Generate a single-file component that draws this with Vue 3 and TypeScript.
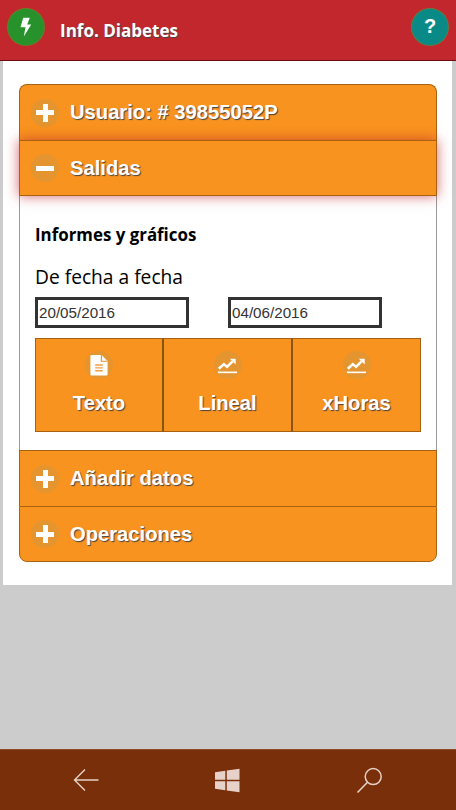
<script setup lang="ts">
const topRows = ['Añadir datos', 'Operaciones']
const actions = [
  { label: 'Texto', icon: 'doc' },
  { label: 'Lineal', icon: 'chart' },
  { label: 'xHoras', icon: 'chart' },
]
</script>

<template>
  <div class="page">
    <header class="topbar">
      <span class="round green">
        <svg width="36" height="36" viewBox="0 0 36 36">
          <path d="M15.2 8.8h6.6l-2.6 6.7h4L15.8 27.5l1.7-9.3h-5z" fill="#fff" />
        </svg>
      </span>
      <h1>Info. Diabetes</h1>
      <span class="round teal">?</span>
    </header>

    <main class="sheet">
      <section class="accordion">
        <div class="row first">
          <span class="bubble"><span class="plus"></span></span>
          <span>Usuario: # 39855052P</span>
        </div>
        <div class="row active">
          <span class="bubble"><span class="minus"></span></span>
          <span>Salidas</span>
        </div>

        <div class="panel">
          <h2>Informes y gráficos</h2>
          <p>De fecha a fecha</p>
          <div class="dates">
            <input type="text" value="20/05/2016" />
            <input type="text" value="04/06/2016" />
          </div>
          <div class="actions">
            <button v-for="a in actions" :key="a.label" type="button">
              <span class="bubble">
                <svg v-if="a.icon === 'doc'" width="18" height="21" viewBox="0 0 18 22">
                  <path d="M1 0h10.5L18 6.5V20.5a1 1 0 0 1-1 1H1a1 1 0 0 1-1-1V1a1 1 0 0 1 1-1z" fill="#fff" />
                  <path d="M11.5 0v6.5H18" fill="#fff" stroke="#e4952f" stroke-width="1.2" />
                  <path d="M5 10.5h8M5 13.5h8M5 16.5h8" stroke="#f0a044" stroke-width="1.4" />
                </svg>
                <svg v-else width="21" height="17" viewBox="0 0 23 18">
                  <path d="M2 12.5l5.5-5 3.5 3 6-6" fill="none" stroke="#fff" stroke-width="2.8" />
                  <path d="M14 1.5h6.5V8z" fill="#fff" />
                  <path d="M1 16.5h21" stroke="#fff" stroke-width="1.8" />
                </svg>
              </span>
              <span>{{ a.label }}</span>
            </button>
          </div>
        </div>

        <div v-for="(r, i) in topRows" :key="r" class="row" :class="{ last: i === 1 }">
          <span class="bubble"><span class="plus"></span></span>
          <span>{{ r }}</span>
        </div>
      </section>
    </main>

    <div class="spacer"></div>

    <footer class="navbar">
      <svg width="26" height="24" viewBox="0 0 26 24">
        <path d="M12 1.5L1.5 12 12 22.5M1.5 12H25.5" fill="none" stroke="#e6d2c8" stroke-width="1.4" />
      </svg>
      <svg width="25" height="25" viewBox="0 0 25 25">
        <path d="M0 4.2L10.3 2.8V11.8H0zM11.8 2.6L24.5 .7V11.8H11.8zM0 13.2H10.3V22.2L0 20.8zM11.8 13.2H24.5V24.3L11.8 22.4z" fill="#e6d2c8" />
      </svg>
      <svg width="27" height="27" viewBox="0 0 27 27">
        <circle cx="17.2" cy="9.6" r="8" fill="none" stroke="#e6d2c8" stroke-width="1.5" />
        <path d="M11.5 15.3L1.5 25.5" fill="none" stroke="#e6d2c8" stroke-width="1.6" />
      </svg>
    </footer>
  </div>
</template>

<style scoped>
.page {
  height: 810px;
  display: flex;
  flex-direction: column;
  background: #cccccc;
  font-family: "Liberation Sans", Arial, sans-serif;
}
.topbar {
  height: 60px;
  flex: none;
  display: flex;
  align-items: flex-start;
  padding: 0 8px;
  background: #c1272d;
  border-bottom: 1px solid #6d0d10;
  box-sizing: content-box;
}
.topbar h1 {
  flex: 1;
  margin: 19px 0 0 16px;
  font: 700 17px/24px "Open Sans", sans-serif;
  color: #fff;
  text-shadow: 1px 1px 1px #444;
}
.round {
  width: 36px;
  height: 36px;
  margin-top: 8.5px;
  border-radius: 50%;
  display: flex;
  align-items: center;
  justify-content: center;
  color: #fff;
  font-weight: 700;
  font-size: 20px;
}
.green {
  background: #27922b;
  box-shadow: 0 0 0 1px #6a7d2a;
}
.teal {
  background: #0a8a87;
  box-shadow: 0 0 0 1px #5f7d45;
}
.sheet {
  flex: none;
  height: 524px;
  margin: 0 4px 0 3px;
  padding: 23px 15px 0 16px;
  box-sizing: border-box;
  background: #fff;
}
.accordion {
  display: flex;
  flex-direction: column;
}
.row {
  height: 56px;
  box-sizing: border-box;
  display: flex;
  align-items: center;
  gap: 11px;
  padding-left: 11px;
  background: #f9931f;
  border: 1px solid #a8620f;
  border-bottom: 0;
  color: #fff;
  font-size: 20.2px;
  font-weight: 700;
  text-shadow: 1px 1px 1px #444;
}
.row.first {
  border-radius: 8px 8px 0 0;
}
.row.last {
  border-bottom: 1px solid #a8620f;
  border-radius: 0 0 8px 8px;
}
.row.active {
  border-bottom: 1px solid #a8620f;
  box-shadow: 0 0 12px rgba(193, 39, 45, 0.7);
  position: relative;
}
.bubble {
  width: 28px;
  height: 28px;
  flex: none;
  border-radius: 50%;
  background: #e4952f;
  display: flex;
  align-items: center;
  justify-content: center;
}
.plus,
.minus {
  display: block;
  background: #fff;
}
.minus {
  width: 18px;
  height: 5px;
}
.plus {
  width: 18px;
  height: 18px;
  background:
    linear-gradient(#fff, #fff) center / 18px 5px no-repeat,
    linear-gradient(#fff, #fff) center / 5px 18px no-repeat;
  border-radius: 1px;
}
.panel {
  height: 254px;
  box-sizing: border-box;
  padding: 28px 15px 0 15px;
  background: #fff;
  border-left: 1px solid #999;
  border-right: 1px solid #999;
  color: #000;
}
.panel h2 {
  margin: 0;
  height: 22px;
  font: 700 16.9px/22px "Open Sans", sans-serif;
}
.panel p {
  margin: 19px 0 0;
  height: 24px;
  font: 400 19.2px/24px "Open Sans", sans-serif;
}
.dates {
  display: flex;
  justify-content: space-between;
  margin-top: 8px;
  padding-right: 39px;
}
.dates input {
  width: 154px;
  height: 31px;
  box-sizing: border-box;
  padding: 0 1px;
  border: 3px solid #333;
  border-radius: 0;
  outline: 0;
  background: #fff;
  color: #333;
  font: 15.2px "Liberation Sans", Arial, sans-serif;
}
.actions {
  display: grid;
  grid-template-columns: 129px 129px 1fr;
  margin-top: 10px;
  height: 94px;
}
.actions button {
  display: flex;
  flex-direction: column;
  align-items: center;
  gap: 13px;
  padding: 12px 0 0;
  background: #f9931f;
  border: 1px solid #a8620f;
  border-left: 0;
  color: #fff;
  font: 700 20.2px "Liberation Sans", Arial, sans-serif;
  text-shadow: 1px 1px 1px #444;
}
.actions button:first-child {
  border-left: 1px solid #a8620f;
}
.actions button:not(:last-child) {
  border-right: 2px solid #8a5413;
}
.spacer {
  flex: 1;
}
.navbar {
  height: 61px;
  flex: none;
  display: flex;
  align-items: center;
  justify-content: space-between;
  padding: 0 73px;
  background: #792f09;
  border-top: 1px solid #8e4a28;
  box-sizing: border-box;
}
</style>
